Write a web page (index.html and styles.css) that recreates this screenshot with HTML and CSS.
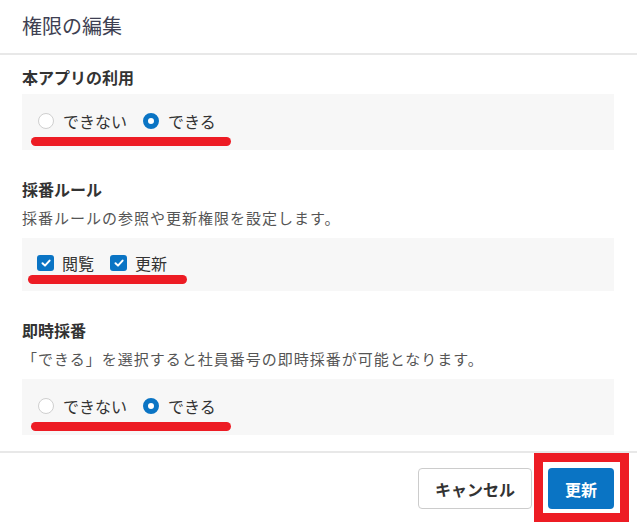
FILE: index.html
```html
<!DOCTYPE html>
<html lang="ja">
<head>
    <meta charset="UTF-8">
    <meta name="viewport" content="width=device-width, initial-scale=1.0">
    <title>権限の編集</title>
    <link rel="stylesheet" href="styles.css">
</head>
<body>
    <div class="dialog">
        <div class="dialog-header">
            <h2 class="dialog-title">権限の編集</h2>
        </div>

        <div class="dialog-body">
            <!-- 本アプリの利用 -->
            <div class="field field-first">
                <h3 class="field-title">本アプリの利用</h3>
                <div class="option-box">
                    <label class="option">
                        <span class="radio"></span>
                        <span>できない</span>
                    </label>
                    <label class="option">
                        <span class="radio checked"></span>
                        <span>できる</span>
                    </label>
                    <span class="mark"></span>
                </div>
            </div>

            <!-- 採番ルール -->
            <div class="field">
                <h3 class="field-title">採番ルール</h3>
                <p class="field-desc">採番ルールの参照や更新権限を設定します。</p>
                <div class="option-box option-box-check">
                    <label class="option">
                        <span class="checkbox">
                            <svg width="12" height="12" viewBox="0 0 12 12"><path d="M2.5 6.2 L5 8.6 L9.6 3.6" fill="none" stroke="#fff" stroke-width="2" stroke-linecap="round" stroke-linejoin="round"/></svg>
                        </span>
                        <span>閲覧</span>
                    </label>
                    <label class="option">
                        <span class="checkbox">
                            <svg width="12" height="12" viewBox="0 0 12 12"><path d="M2.5 6.2 L5 8.6 L9.6 3.6" fill="none" stroke="#fff" stroke-width="2" stroke-linecap="round" stroke-linejoin="round"/></svg>
                        </span>
                        <span>更新</span>
                    </label>
                    <span class="mark mark-check"></span>
                </div>
            </div>

            <!-- 即時採番 -->
            <div class="field">
                <h3 class="field-title">即時採番</h3>
                <p class="field-desc">「できる」を選択すると社員番号の即時採番が可能となります。</p>
                <div class="option-box">
                    <label class="option">
                        <span class="radio"></span>
                        <span>できない</span>
                    </label>
                    <label class="option">
                        <span class="radio checked"></span>
                        <span>できる</span>
                    </label>
                    <span class="mark"></span>
                </div>
            </div>
        </div>

        <div class="dialog-footer">
            <button class="btn btn-cancel">キャンセル</button>
            <div class="btn-wrap">
                <button class="btn btn-primary">更新</button>
                <span class="frame"></span>
            </div>
        </div>
    </div>
</body>
</html>
```

FILE: styles.css
```css
html, body {
    margin: 0;
    padding: 0;
    background-color: #fff;
}

body {
    font-family: "Noto Sans CJK JP", "Noto Sans", sans-serif;
    color: #333;
}

.dialog {
    width: 637px;
}

.dialog-header {
    height: 53px;
    border-bottom: 2px solid #e8e8e8;
    padding-left: 22px;
    display: flex;
    align-items: center;
}

.dialog-title {
    margin: 0;
    font-size: 20px;
    font-weight: normal;
    color: #3e3f52;
    line-height: 28px;
    margin-top: -1px;
}

.dialog-body {
    padding: 0 23px 16px 22px;
}

.field {
    margin-top: 27px;
}

.field-first {
    margin-top: 10px;
}

.field-title {
    margin: 0;
    font-size: 16px;
    font-weight: bold;
    line-height: 24px;
    color: #333;
}

.field-desc {
    margin: 6px 0 0;
    font-size: 15px;
    line-height: 22px;
    letter-spacing: 1px;
    color: #555;
}

.option-box {
    position: relative;
    margin-top: 5px;
    height: 56px;
    background-color: #f7f7f7;
    padding-left: 16px;
    display: flex;
    align-items: center;
    gap: 16px;
    box-sizing: border-box;
    padding-bottom: 2px;
}

.field-desc + .option-box {
    margin-top: 9px;
}

.option-box-check {
    height: 53px;
    padding-left: 15px;
    padding-bottom: 3px;
}

.option {
    display: flex;
    align-items: center;
    gap: 9px;
    font-size: 16px;
    line-height: 22px;
    color: #333;
}

.option-box-check .option {
    gap: 8px;
}

.radio {
    width: 16px;
    height: 16px;
    box-sizing: border-box;
    border: 1px solid #cfcfcf;
    border-radius: 50%;
    background-color: #fff;
}

.radio.checked {
    border: 5px solid #0a74c4;
}

.checkbox {
    width: 17px;
    height: 16px;
    border-radius: 3px;
    background-color: #0a74c4;
    display: flex;
    align-items: center;
    justify-content: center;
}

.checkbox svg {
    display: block;
}

/* 赤い下線 */
.mark {
    position: absolute;
    left: 9px;
    top: 43px;
    width: 200px;
    height: 9px;
    border-radius: 5px;
    background-color: #ed1c24;
}

.mark-check {
    left: 6px;
    top: 37px;
    width: 159px;
}

.dialog-footer {
    border-top: 2px solid #e8e8e8;
    padding: 15px 23px 16px 0;
    display: flex;
    justify-content: flex-end;
    gap: 16px;
}

.btn {
    height: 41px;
    border-radius: 4px;
    font-family: inherit;
    font-size: 16px;
    font-weight: bold;
    cursor: pointer;
    padding: 0;
}

.btn-cancel {
    width: 114px;
    border: 1px solid #cccccc;
    background-color: #fff;
    color: #333;
}

.btn-wrap {
    position: relative;
}

.btn-primary {
    width: 66px;
    border: none;
    background-color: #0a74c4;
    color: #fff;
    display: block;
}

/* 赤い枠 */
.frame {
    position: absolute;
    left: -14px;
    top: -15px;
    right: -15px;
    bottom: -13px;
    border: 9px solid #ed1c24;
}
```
